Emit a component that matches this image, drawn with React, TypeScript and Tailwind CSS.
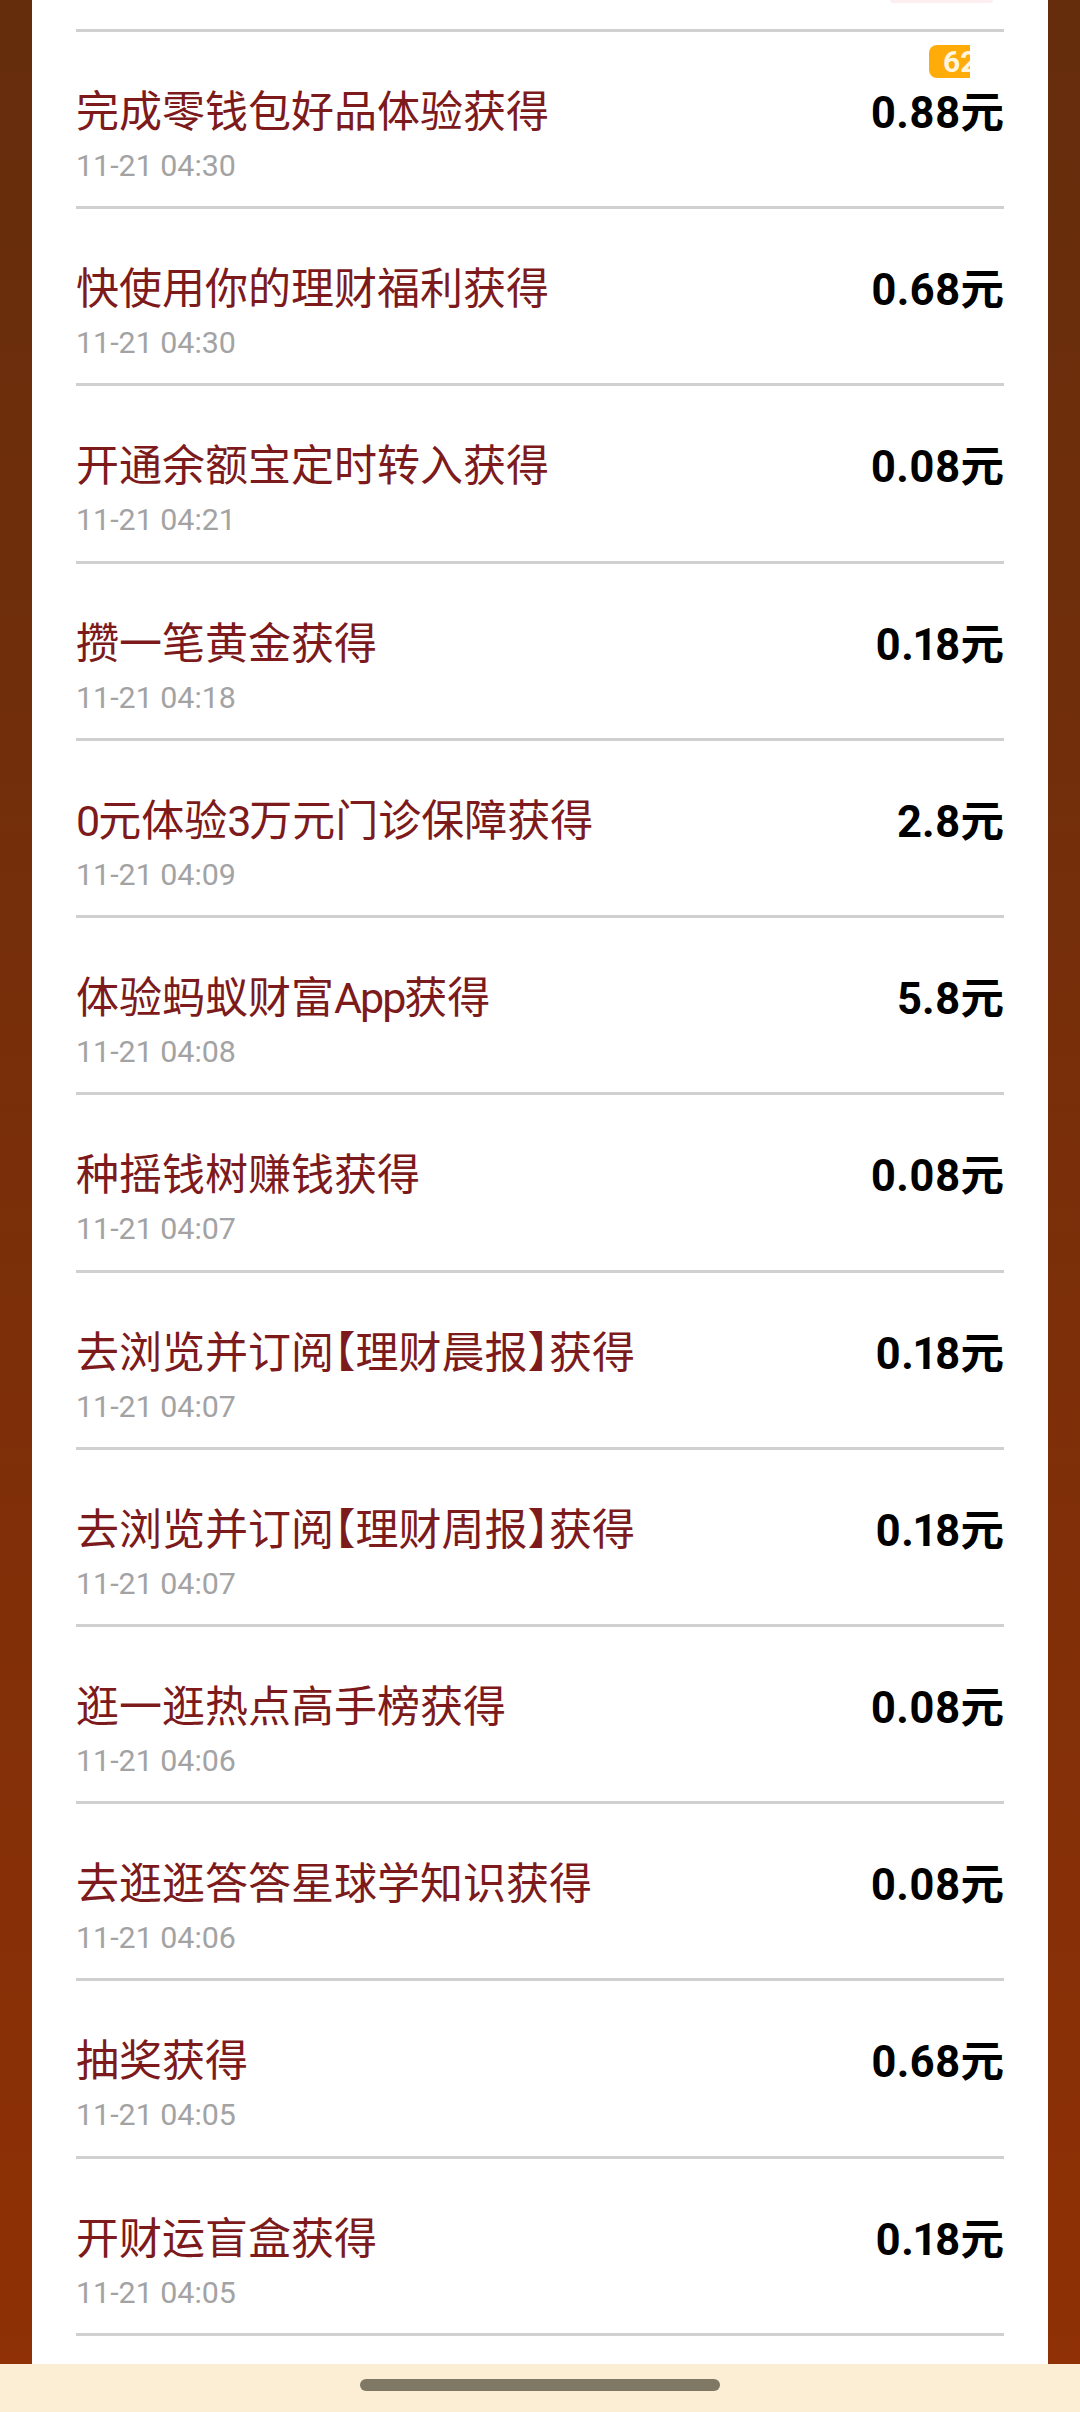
import type { ReactNode } from "react"

// latin bits in the titles are narrower than Roboto
const Narrow = ({ children }: { children: ReactNode }) => (
  <span className="tracking-[-2px]">{children}</span>
)

const rows: [ReactNode, string, string][] = [
  ["完成零钱包好品体验获得", "11-21 04:30", "0.88"],
  ["快使用你的理财福利获得", "11-21 04:30", "0.68"],
  ["开通余额宝定时转入获得", "11-21 04:21", "0.08"],
  ["攒一笔黄金获得", "11-21 04:18", "0.18"],
  [<><Narrow>0</Narrow>元体验<Narrow>3</Narrow>万元门诊保障获得</>, "11-21 04:09", "2.8"],
  [<>体验蚂蚁财富<Narrow>App</Narrow>获得</>, "11-21 04:08", "5.8"],
  ["种摇钱树赚钱获得", "11-21 04:07", "0.08"],
  ["去浏览并订阅【理财晨报】获得", "11-21 04:07", "0.18"],
  ["去浏览并订阅【理财周报】获得", "11-21 04:07", "0.18"],
  ["逛一逛热点高手榜获得", "11-21 04:06", "0.08"],
  ["去逛逛答答星球学知识获得", "11-21 04:06", "0.08"],
  ["抽奖获得", "11-21 04:05", "0.68"],
  ["开财运盲盒获得", "11-21 04:05", "0.18"],
]

const App = () => {
  return (
    <div className="h-[2412px] w-[1080px] flex flex-col overflow-hidden font-['Roboto','Noto_Sans_CJK_SC',sans-serif]">
      <div className="flex-1 min-h-0 px-8 bg-gradient-to-b from-[#652d0c] to-[#8f3005]">
        <div className="h-full bg-white px-[44px]">
          <div className="h-[32px] border-b-[3px] border-[#d0d0d0] flex justify-end pr-[11px]">
            <div className="w-[103px] h-[3px] rounded-b-full bg-[#fdeef2]" />
          </div>
          {rows.map((row, i) => (
            <div key={i} className="relative h-[177.23px] border-b-[3px] border-[#d0d0d0] flex justify-between">
              <div>
                <div className="mt-[55px] text-[43px] leading-[50px] text-[#7d1a1c] [font-feature-settings:'halt']">
                  {row[0]}
                </div>
                <div className="mt-[11px] text-[30.4px] leading-[36px] text-[#a3a3a3]">{row[1]}</div>
              </div>
              <div className="mt-[56px] text-[43.5px] leading-[52px] font-bold text-black [font-feature-settings:'pnum']">
                {row[2]}元
              </div>
              {i === 0 && (
                <div className="absolute right-[34px] top-[13px] w-[41px] h-[33px] rounded-l-lg bg-[#ffab0a] overflow-hidden pl-[14px] text-[30px] leading-[33px] font-bold text-[#fff6e0]">
                  62
                </div>
              )}
            </div>
          ))}
        </div>
      </div>
      <div className="h-[48px] shrink-0 bg-[#fbeed4] flex justify-center pt-[15px]">
        <div className="w-[360px] h-[12px] rounded-full bg-[#7f7865]" />
      </div>
    </div>
  )
}

export default App
